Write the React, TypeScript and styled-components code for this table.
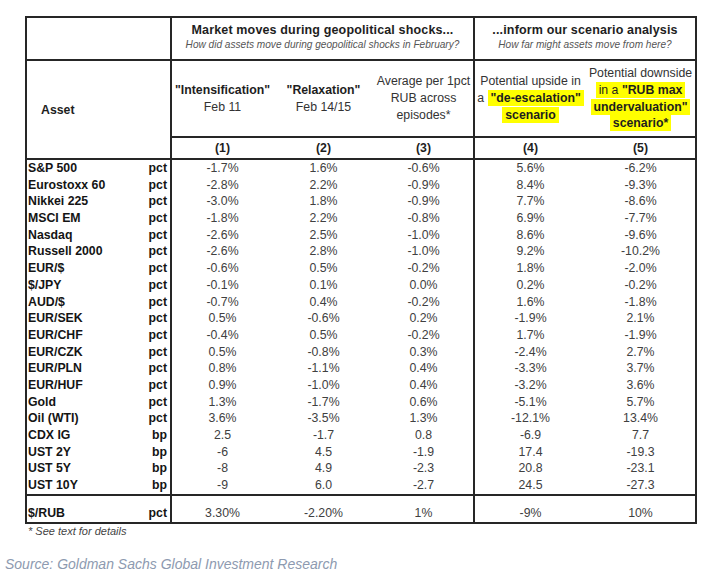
import React from "react";
import styled, { createGlobalStyle, css } from "styled-components";

const GlobalStyle = createGlobalStyle`
  html, body { margin: 0; padding: 0; background: #ffffff; }
  body { font-family: "Liberation Sans", Arial, sans-serif; color: #222; }
`;

const LINE = "#262626";

const Page = styled.div`
  width: 712px;
  height: 575px;
  box-sizing: border-box;
  padding: 16px 0 0 5px;
  overflow: hidden;
  display: flex;
  flex-direction: column;
  align-items: flex-start;
`;

const Frame = styled.div`
  margin-left: 20px;
  width: 672px;
  box-sizing: border-box;
  border: 2px solid ${LINE};
  display: grid;
  grid-template-columns: 145px 101px 101px 101px 111px 109px;
  grid-template-rows: 43px 77px 22px repeat(20, 16.7px) 28px;
  font-size: 12.3px;
`;

type Edge = { $r?: boolean; $b?: boolean; $t?: boolean };

const edges = css<Edge>`
  box-sizing: border-box;
  border-right: ${(p) => (p.$r ? `2px solid ${LINE}` : "none")};
  border-bottom: ${(p) => (p.$b ? `2px solid ${LINE}` : "none")};
  border-top: ${(p) => (p.$t ? `2px solid ${LINE}` : "none")};
`;

const Corner = styled.div<Edge>`
  ${edges}
`;

const GroupHead = styled.div<Edge & { $span: number }>`
  ${edges}
  grid-column: span ${(p) => p.$span};
  display: flex;
  flex-direction: column;
  align-items: center;
  padding-top: 4px;
`;

const GroupTitle = styled.div`
  font-weight: bold;
  font-size: 12.5px;
  line-height: 16px;
  color: #1e1e1e;
  letter-spacing: 0.15px;
`;

const GroupSub = styled.div`
  font-style: italic;
  font-size: 10.1px;
  line-height: 13px;
  color: #555;
`;

const AssetHead = styled.div<Edge>`
  ${edges}
  grid-row: span 2;
  display: flex;
  align-items: center;
  padding: 0 0 0 14px;
  font-weight: bold;
  color: #1e1e1e;
`;

const ColHead = styled.div<Edge>`
  ${edges}
  display: flex;
  flex-direction: column;
  align-items: center;
  justify-content: center;
  text-align: center;
  line-height: 16.7px;
  color: #333;
`;

const ColName = styled.span`
  font-weight: bold;
  color: #1e1e1e;
`;

const Mark = styled.span<{ $bold?: boolean }>`
  background: #ffff00;
  font-weight: ${(p) => (p.$bold ? "bold" : "normal")};
  color: #1e1e1e;
  padding: 1px 3px;
  -webkit-box-decoration-break: clone;
  box-decoration-break: clone;
`;

const Strong = styled.span`
  font-weight: bold;
`;

const ColNumber = styled.div<Edge>`
  ${edges}
  display: flex;
  align-items: center;
  justify-content: center;
  font-weight: bold;
  color: #1e1e1e;
`;

const AssetLabel = styled.div<Edge & { $bottom?: boolean }>`
  ${edges}
  display: flex;
  justify-content: space-between;
  align-items: ${(p) => (p.$bottom ? "flex-end" : "center")};
  padding: 0 3px 0 1px;
  font-weight: bold;
  color: #141414;
  line-height: 16.7px;
`;

const Value = styled.div<Edge & { $bottom?: boolean }>`
  ${edges}
  display: flex;
  justify-content: center;
  align-items: ${(p) => (p.$bottom ? "flex-end" : "center")};
  color: #404040;
  line-height: 16.7px;
`;

const Footnote = styled.div`
  margin-left: 23px;
  font-style: italic;
  font-size: 11px;
  line-height: 14px;
  color: #444;
`;

const Source = styled.div`
  margin-top: 18px;
  font-style: italic;
  font-size: 14px;
  line-height: 16px;
  color: #8d9ab0;
`;

type Row = { name: string; unit: string; v: string[] };

const rows: Row[] = [
  { name: "S&P 500", unit: "pct", v: ["-1.7%", "1.6%", "-0.6%", "5.6%", "-6.2%"] },
  { name: "Eurostoxx 60", unit: "pct", v: ["-2.8%", "2.2%", "-0.9%", "8.4%", "-9.3%"] },
  { name: "Nikkei 225", unit: "pct", v: ["-3.0%", "1.8%", "-0.9%", "7.7%", "-8.6%"] },
  { name: "MSCI EM", unit: "pct", v: ["-1.8%", "2.2%", "-0.8%", "6.9%", "-7.7%"] },
  { name: "Nasdaq", unit: "pct", v: ["-2.6%", "2.5%", "-1.0%", "8.6%", "-9.6%"] },
  { name: "Russell 2000", unit: "pct", v: ["-2.6%", "2.8%", "-1.0%", "9.2%", "-10.2%"] },
  { name: "EUR/$", unit: "pct", v: ["-0.6%", "0.5%", "-0.2%", "1.8%", "-2.0%"] },
  { name: "$/JPY", unit: "pct", v: ["-0.1%", "0.1%", "0.0%", "0.2%", "-0.2%"] },
  { name: "AUD/$", unit: "pct", v: ["-0.7%", "0.4%", "-0.2%", "1.6%", "-1.8%"] },
  { name: "EUR/SEK", unit: "pct", v: ["0.5%", "-0.6%", "0.2%", "-1.9%", "2.1%"] },
  { name: "EUR/CHF", unit: "pct", v: ["-0.4%", "0.5%", "-0.2%", "1.7%", "-1.9%"] },
  { name: "EUR/CZK", unit: "pct", v: ["0.5%", "-0.8%", "0.3%", "-2.4%", "2.7%"] },
  { name: "EUR/PLN", unit: "pct", v: ["0.8%", "-1.1%", "0.4%", "-3.3%", "3.7%"] },
  { name: "EUR/HUF", unit: "pct", v: ["0.9%", "-1.0%", "0.4%", "-3.2%", "3.6%"] },
  { name: "Gold", unit: "pct", v: ["1.3%", "-1.7%", "0.6%", "-5.1%", "5.7%"] },
  { name: "Oil (WTI)", unit: "pct", v: ["3.6%", "-3.5%", "1.3%", "-12.1%", "13.4%"] },
  { name: "CDX IG", unit: "bp", v: ["2.5", "-1.7", "0.8", "-6.9", "7.7"] },
  { name: "UST 2Y", unit: "bp", v: ["-6", "4.5", "-1.9", "17.4", "-19.3"] },
  { name: "UST 5Y", unit: "bp", v: ["-8", "4.9", "-2.3", "20.8", "-23.1"] },
  { name: "UST 10Y", unit: "bp", v: ["-9", "6.0", "-2.7", "24.5", "-27.3"] },
];

const rub: Row = { name: "$/RUB", unit: "pct", v: ["3.30%", "-2.20%", "1%", "-9%", "10%"] };

function DataRow({ row, last }: { row: Row; last?: boolean }) {
  return (
    <>
      <AssetLabel $r $t={last} $bottom={last}>
        <span>{row.name}</span>
        <span>{row.unit}</span>
      </AssetLabel>
      {row.v.map((val, i) => (
        <Value key={i} $r={i === 2} $t={last} $bottom={last}>
          {val}
        </Value>
      ))}
    </>
  );
}

export default function App() {
  return (
    <>
      <GlobalStyle />
      <Page>
        <Frame>
          <Corner $r $b />
          <GroupHead $span={3} $r $b>
            <GroupTitle>Market moves during geopolitical shocks...</GroupTitle>
            <GroupSub>How did assets move during geopolitical shocks in February?</GroupSub>
          </GroupHead>
          <GroupHead $span={2} $b>
            <GroupTitle>...inform our scenario analysis</GroupTitle>
            <GroupSub>How far might assets move from here?</GroupSub>
          </GroupHead>

          <AssetHead $r $b>Asset</AssetHead>
          <ColHead $b>
            <ColName>"Intensification"</ColName>
            <span>Feb 11</span>
          </ColHead>
          <ColHead $b>
            <ColName>"Relaxation"</ColName>
            <span>Feb 14/15</span>
          </ColHead>
          <ColHead $b $r>
            <span>Average per 1pct</span>
            <span>RUB across</span>
            <span>episodes*</span>
          </ColHead>
          <ColHead $b>
            <span>Potential upside in</span>
            <span>
              a <Mark $bold>"de-escalation"</Mark>
            </span>
            <span>
              <Mark $bold>scenario</Mark>
            </span>
          </ColHead>
          <ColHead $b>
            <span>Potential downside</span>
            <span>
              <Mark>
                in a <Strong>"RUB max</Strong>
              </Mark>
            </span>
            <span>
              <Mark $bold>undervaluation"</Mark>
            </span>
            <span>
              <Mark $bold>scenario*</Mark>
            </span>
          </ColHead>

          <ColNumber $b>(1)</ColNumber>
          <ColNumber $b>(2)</ColNumber>
          <ColNumber $b $r>(3)</ColNumber>
          <ColNumber $b>(4)</ColNumber>
          <ColNumber $b>(5)</ColNumber>

          {rows.map((r) => (
            <DataRow key={r.name} row={r} />
          ))}
          <DataRow row={rub} last />
        </Frame>
        <Footnote>* See text for details</Footnote>
        <Source>Source: Goldman Sachs Global Investment Research</Source>
      </Page>
    </>
  );
}
